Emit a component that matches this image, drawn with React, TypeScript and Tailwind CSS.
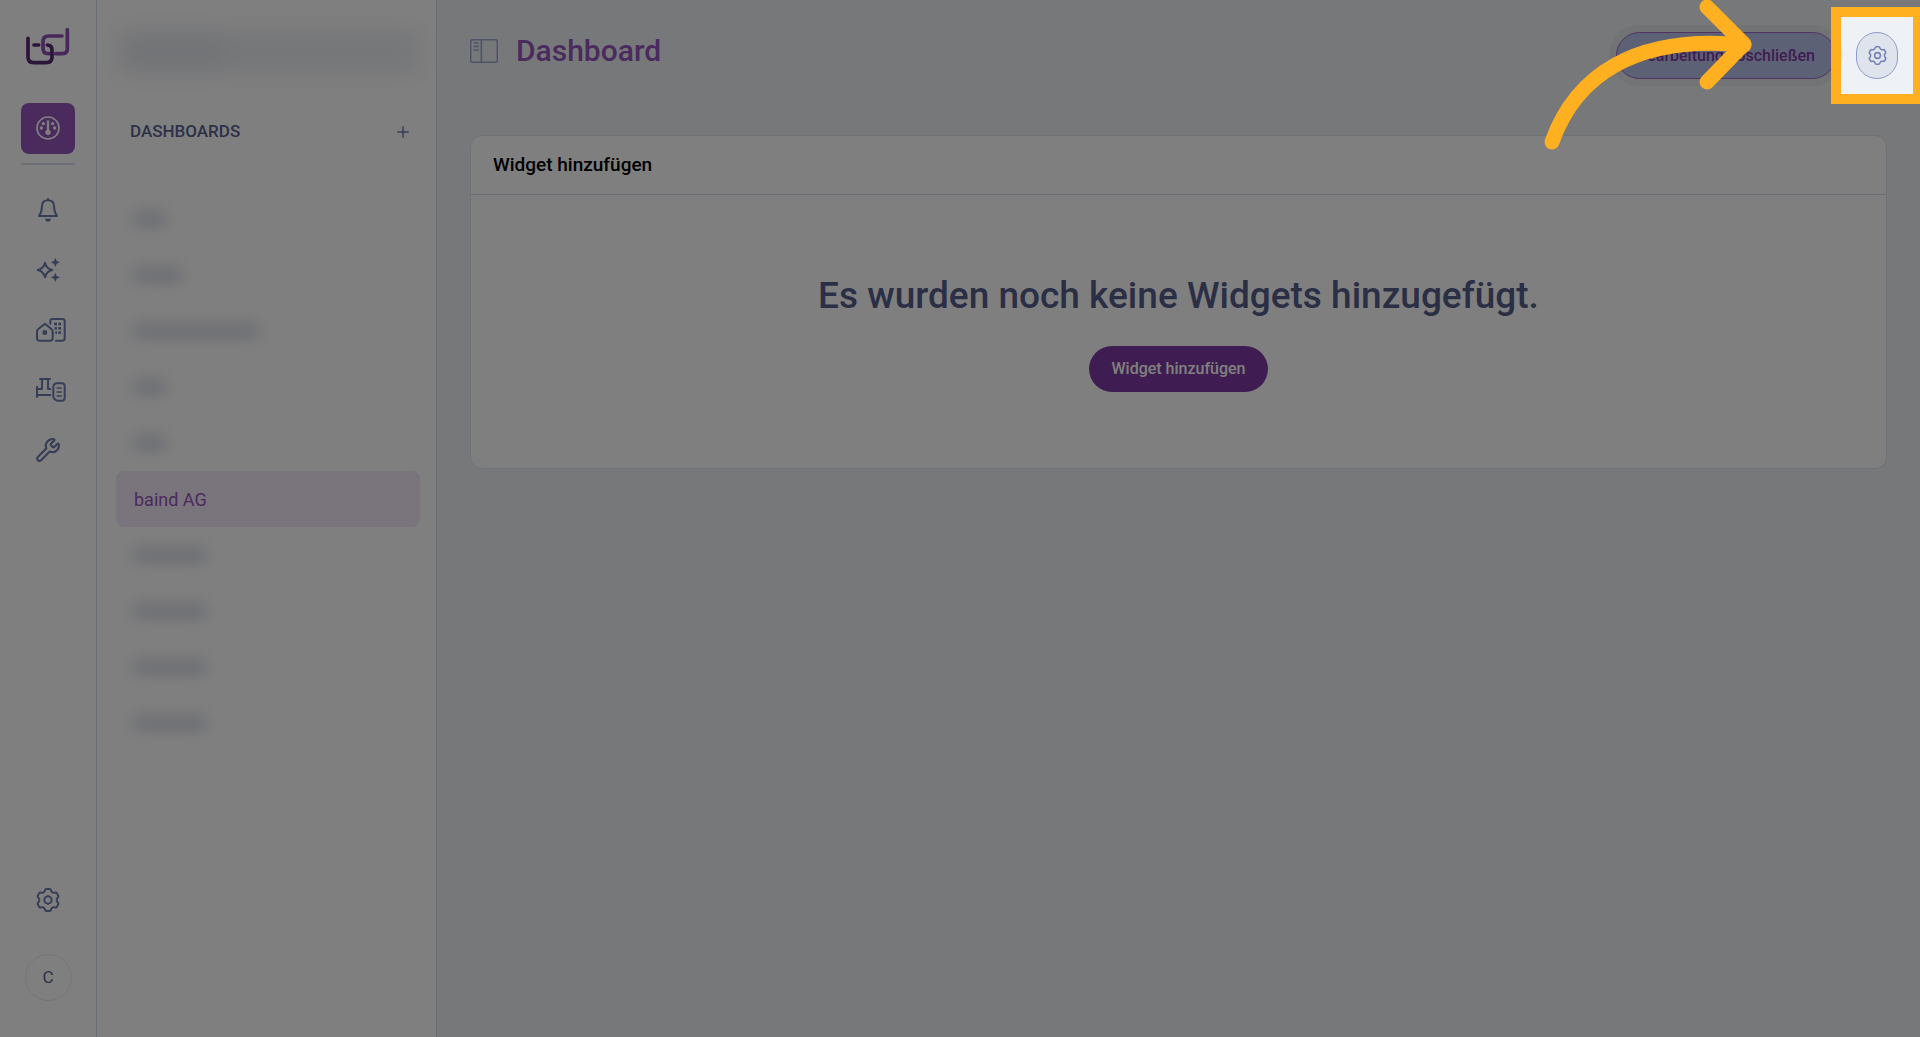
import React from 'react';
import { Plus, Wrench } from 'lucide-react';

interface DashboardEntry {
  id: number;
  name?: string;
  // width of the redacted label
  bar?: string;
}

const dashboards: DashboardEntry[] = [
  { id: 1, bar: 'w-8' },
  { id: 2, bar: 'w-12' },
  { id: 3, bar: 'w-[124px]' },
  { id: 4, bar: 'w-8' },
  { id: 5, bar: 'w-8' },
  { id: 6, name: 'baind AG' },
  { id: 7, bar: 'w-[72px]' },
  { id: 8, bar: 'w-[72px]' },
  { id: 9, bar: 'w-[72px]' },
  { id: 10, bar: 'w-[72px]' },
];

function Logo() {
  return (
    <svg width="44" height="38" viewBox="0 0 132 114" fill="none" strokeWidth="11" strokeLinecap="round">
      <path stroke="#9150b4" d="M108 24H68Q51 24 51 40V61Q51 77 66 77H70M89 77H107Q124 77 124 62V5" />
      <path stroke="#562a70" d="M6 31V87Q6 104 23 104H60Q78 104 78 88V66Q78 51 64 51M24 51H38" />
    </svg>
  );
}

function GaugeIcon() {
  return (
    <svg width="24" height="24" viewBox="0 0 72 72" fill="none" stroke="#fff">
      <circle cx="36" cy="36" r="33" strokeWidth="5" />
      <path d="M36 16V48" strokeWidth="7" strokeLinecap="round" />
      <g fill="#fff" stroke="none">
        <circle cx="36" cy="49" r="8" />
        <circle cx="22" cy="23" r="5" />
        <circle cx="50" cy="23" r="5" />
        <circle cx="16" cy="36" r="5" />
        <circle cx="56" cy="36" r="5" />
      </g>
    </svg>
  );
}

function BellIcon() {
  return (
    <svg width="24" height="26" viewBox="0 0 72 78" fill="none" stroke="currentColor" strokeWidth="6" strokeLinecap="round" strokeLinejoin="round">
      <path d="M9 57H63C57 49 54 44 54 28C54 16 46 10 36 10S18 16 18 28C18 44 15 49 9 57ZM36 6V9" />
      <path d="M27 65H45C44 71 40 74 36 74S28 71 27 65Z" fill="currentColor" stroke="none" />
    </svg>
  );
}

function SparklesIcon() {
  return (
    <svg width="24" height="26" viewBox="0 0 72 76" fill="currentColor">
      <path
        d="M27 16Q31 34 49 38Q31 42 27 60Q23 42 5 38Q23 34 27 16Z"
        fill="none"
        stroke="currentColor"
        strokeWidth="6"
        strokeLinejoin="round"
      />
      <path d="M58 1L62 11L72 15L62 19L58 29L54 19L44 15L54 11ZM58 46L62 56L72 60L62 64L58 74L54 64L44 60L54 56Z" />
    </svg>
  );
}

function BuildingsIcon() {
  return (
    <svg width="30" height="24" viewBox="0 0 90 72" fill="none" stroke="currentColor" strokeWidth="6" strokeLinecap="round" strokeLinejoin="round">
      <path d="M27 17L47 34Q50 36 50 40V61Q50 68 43 68H10Q3 68 3 61V40Q3 36 6 34Z" />
      <path d="M43 17V9Q43 3 49 3H79Q86 3 86 10V61Q86 68 79 68H60" />
      <g fill="currentColor" stroke="none">
        <rect x="20" y="37" width="13" height="13" rx="2" />
        <rect x="54" y="14" width="9" height="8" />
        <rect x="67" y="14" width="8" height="8" />
        <rect x="56" y="27" width="7" height="8" />
        <rect x="67" y="27" width="8" height="8" />
        <rect x="58" y="40" width="5" height="8" />
        <rect x="67" y="40" width="8" height="8" />
      </g>
    </svg>
  );
}

function PipeIcon() {
  return (
    <svg width="30" height="24" viewBox="0 0 90 72" fill="none" stroke="currentColor" strokeWidth="6" strokeLinecap="round" strokeLinejoin="round">
      <path d="M3 26V57M3 51H43M12 3H42M18 3V33H3M36 3V33H43" />
      <path d="M60 16H78Q86 16 86 24V60Q86 68 78 68H64Q52 64 52 54V28Q52 18 60 16Z" />
      <path d="M63 30H76M63 42H76M63 54H76" strokeWidth="4" />
    </svg>
  );
}

function GearIcon({ size }: { size: number }) {
  return (
    <svg
      width={size}
      height={size}
      viewBox="-36 -36 72 72"
      fill="none"
      stroke="currentColor"
      strokeWidth="6"
      strokeLinejoin="round"
    >
      <path d="M-12 -24Q-9 -26 -9 -29Q-8 -33 -5 -33H5Q8 -33 9 -29Q9 -26 12 -24L15 -22Q18 -21 21 -22Q25 -23 27 -20L31 -12Q32 -9 29 -7Q26 -4 26 0Q26 4 29 7Q32 9 31 12L27 20Q25 23 21 22Q18 21 15 22L12 24Q9 26 9 29Q8 33 5 33H-5Q-8 33 -9 29Q-9 26 -12 24L-15 22Q-18 21 -21 22Q-25 23 -27 20L-31 12Q-32 9 -29 7Q-26 4 -26 0Q-26 -4 -29 -7Q-32 -9 -31 -12L-27 -20Q-25 -23 -21 -22Q-18 -21 -15 -22Z" />
      <circle r="11" />
    </svg>
  );
}

function PanelIcon() {
  return (
    <svg width="28" height="24" viewBox="0 0 84 72" fill="none" stroke="currentColor" strokeWidth="5">
      <rect x="2" y="2" width="80" height="68" rx="7" />
      <path d="M34 2V70M11 12H26M11 22H26M11 33H26" />
    </svg>
  );
}

function Arrow() {
  return (
    <svg
      className="pointer-events-none absolute right-[164px] top-0 z-30"
      width="216"
      height="156"
      viewBox="1540 0 216 156"
      fill="none"
      stroke="#ffb020"
      strokeWidth="15"
      strokeLinecap="round"
      strokeLinejoin="round"
      aria-hidden="true"
    >
      <path d="M1552 142C1575 77 1634 34 1744 45" />
      <path d="M1707 7L1744 44L1707 82" />
    </svg>
  );
}

function Rail() {
  const item = 'flex h-[60px] w-full items-center justify-center';
  return (
    <nav className="flex w-[97px] shrink-0 flex-col items-center border-r border-[#d3daec] bg-white text-[#6d7cae]">
      <a href="#" aria-label="Home" className="mt-7">
        <Logo />
      </a>
      <a
        href="#"
        aria-label="Dashboard"
        className="mt-[37px] flex h-[51px] w-[54px] items-center justify-center rounded-lg bg-[#9654bd] pb-[2px]"
      >
        <GaugeIcon />
      </a>
      <div className="mb-[15px] mt-[9px] h-[2px] w-[54px] bg-[#dbe2ec]" />
      <a href="#" aria-label="Benachrichtigungen" className={item}>
        <BellIcon />
      </a>
      <a href="#" aria-label="Assistent" className={item}>
        <SparklesIcon />
      </a>
      <a href="#" aria-label="Immobilien" className={`${item} pl-[6px]`}>
        <BuildingsIcon />
      </a>
      <a href="#" aria-label="Anlagen" className={`${item} pl-[6px]`}>
        <PipeIcon />
      </a>
      <a href="#" aria-label="Wartung" className={item}>
        <Wrench size={26} strokeWidth={2} />
      </a>
      <a href="#" aria-label="Einstellungen" className="mt-auto">
        <GearIcon size={24} />
      </a>
      <button className="mb-9 mt-[42px] h-[47px] w-[47px] rounded-full border border-[#e8ebf2] text-[17px] text-[#5a6290]">
        C
      </button>
    </nav>
  );
}

function Sidebar() {
  return (
    <aside className="w-[340px] shrink-0 border-r border-[#d3d8ec] bg-white pl-[19px] pr-4">
      <div className="mt-[31px] h-[42px] rounded bg-[#eceef2] blur-[12px]">
        <div className="ml-3 h-full w-24 bg-[#e5e7ed]" />
      </div>
      <div className="mt-[43px] flex h-8 items-center justify-between pl-[14px] pr-2">
        <h2 className="text-[17px] font-medium text-[#5a6290]">DASHBOARDS</h2>
        <button aria-label="Dashboard erstellen" className="text-[#6d7cb2]">
          <Plus size={18} strokeWidth={2} />
        </button>
      </div>
      <ul className="mt-[43px]">
        {dashboards.map((entry) => (
          <li key={entry.id}>
            <a
              href="#"
              className={
                entry.name
                  ? 'flex h-14 items-center rounded-lg bg-[#f5e9f8] pl-[18px] text-[18px] text-[#9654bd]'
                  : 'flex h-14 items-center pl-[18px]'
              }
            >
              {entry.name ?? (
                <span className={`${entry.bar} h-[18px] bg-[#dfe1ea] blur-[7px]`} />
              )}
            </a>
          </li>
        ))}
      </ul>
    </aside>
  );
}

function Header() {
  return (
    <header className="flex items-start justify-between pl-[33px] pr-[22px] pt-8">
      <div className="flex h-[38px] items-center gap-[18px]">
        <button aria-label="Seitenleiste umschalten" className="text-[#98a8cc]">
          <PanelIcon />
        </button>
        <h1 className="text-[30px] font-medium leading-[38px] text-[#9654bd]">Dashboard</h1>
      </div>
      <div className="flex gap-5">
        <button className="h-[47px] rounded-full border border-[#a166c4] bg-[#b9c2ea] px-5 text-[16px] font-medium text-[#7e3aa4] ring-[7px] ring-[#e4e6ea]">
          Bearbeitung abschließen
        </button>
        <div className="relative">
          <button
            aria-label="Dashboard-Einstellungen"
            className="flex h-[47px] w-[42px] items-center justify-center rounded-full border border-[#8f9cc8] bg-[#dfe3ec] text-[#7383b5]"
          >
            <GearIcon size={19} />
          </button>
          {/* spotlight: the huge shadow dims the rest of the page */}
          <div className="pointer-events-none absolute -inset-[25px] z-20 border-[10px] border-[#ffb020] shadow-[0_0_0_3000px_rgba(0,0,0,0.5)]" />
        </div>
      </div>
    </header>
  );
}

export default function App() {
  return (
    <div className="relative flex min-h-screen overflow-hidden bg-[#eef1f5] font-[Roboto,sans-serif]">
      <Rail />
      <Sidebar />
      <main className="min-w-0 flex-1">
        <Header />
        <section className="mx-[33px] mt-14 rounded-xl border border-[#e0e4ee] bg-white">
          <h2 className="border-b border-[#d8dcea] px-[22px] py-4 text-[19px] font-medium leading-[26px] text-black">
            Widget hinzufügen
          </h2>
          <div className="flex flex-col items-center py-[76px]">
            <p className="text-center text-[37px] font-medium leading-[50px] text-[#565e8c]">
              Es wurden noch keine Widgets hinzugefügt.
            </p>
            <button className="mt-[25px] h-[46px] rounded-full bg-[#7e3aa4] px-[22px] text-[16px] font-medium text-white">
              Widget hinzufügen
            </button>
          </div>
        </section>
      </main>
      <Arrow />
    </div>
  );
}
